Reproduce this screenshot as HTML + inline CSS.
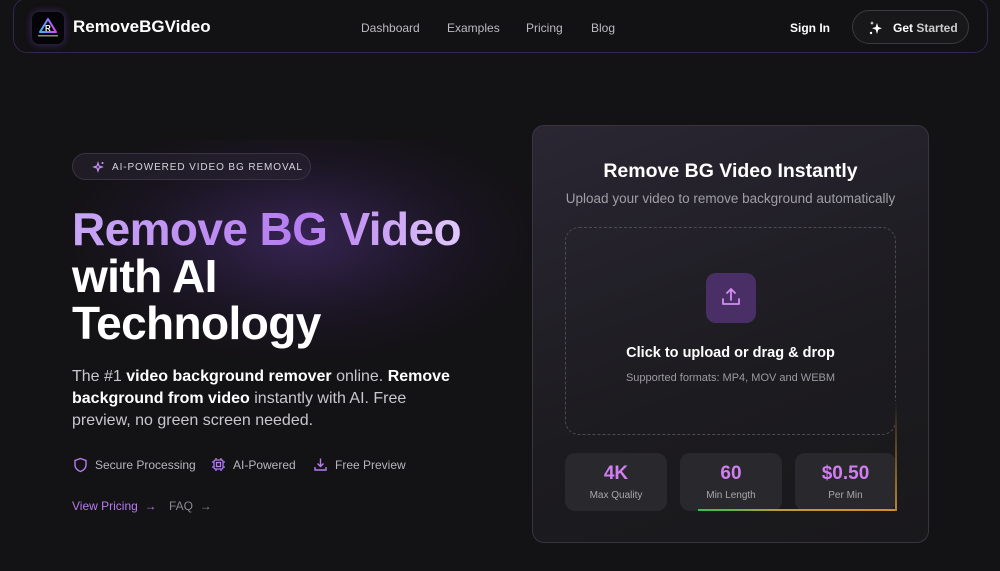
<!DOCTYPE html>
<html><head><meta charset="utf-8"><style>
*{margin:0;padding:0;box-sizing:border-box}
body{width:1000px;height:571px;overflow:hidden;background:#131214;font-family:"Liberation Sans",sans-serif;position:relative;color:#fff}
.glow{position:absolute;left:60px;top:140px;width:480px;height:220px;background:radial-gradient(ellipse at 50% 45%,rgba(110,65,180,.38),rgba(70,40,120,.15) 45%,rgba(0,0,0,0) 72%)}
.hdr{position:absolute;left:13px;top:-2px;width:975px;height:55px;border:1px solid #35264d;border-radius:14px;background:#121113}
.logo{position:absolute;left:32px;top:12px;width:32px;height:32px;border-radius:7px;background:#050508;box-shadow:0 0 8px rgba(140,90,255,.4)}
.brand{position:absolute;left:73px;top:17px;font-size:17px;font-weight:bold}
.nav{position:absolute;top:21px;font-size:12px;color:#bdbbc2}
.btn{position:absolute;left:852px;top:10px;width:117px;height:34px;border-radius:17px;border:1px solid #3a3a3e;background:#18181a;font-size:12px;font-weight:bold}
.badge{position:absolute;left:72px;top:153px;width:239px;height:27px;border:1px solid #3a3344;border-radius:14px;background:rgba(40,35,50,.6);font-size:10px;letter-spacing:.9px;color:#d6d3dc;padding:8px 0 0 39px;white-space:nowrap}
h1{position:absolute;left:72px;top:206px;font-size:46px;line-height:47px;font-weight:bold;letter-spacing:-.6px}
.p{position:absolute;left:72px;top:366px;width:392px;font-size:16px;line-height:22px;color:#c9c7cd}
.p b{color:#fff}
.f{position:absolute;top:458px;font-size:12px;color:#b8b6bc}
.card{position:absolute;left:532px;top:125px;width:397px;height:418px;border:1px solid #38363c;border-radius:12px;background:linear-gradient(160deg,#2a2633,#1c1b1f 60%,#19181b)}
.drop{position:absolute;left:32px;top:101px;width:331px;height:208px;border:1.5px dashed #4c4a52;border-radius:14px}
.st{position:absolute;top:327px;width:102px;height:58px;border-radius:10px;background:#29282c;text-align:center}
.st b{display:block;font-size:19px;color:#d07ef0;margin-top:10px}
.st span{font-size:10px;color:#a9a7ae}
</style></head><body>
<div class="glow"></div>
<div class="hdr"></div>
<div class="logo"><svg width="32" height="32"><defs><linearGradient id="g" x1="0" x2="1"><stop offset="0" stop-color="#38b6ff"/><stop offset="1" stop-color="#e040fb"/></linearGradient></defs><path d="M16 7 L24 20 L8 20 Z" fill="none" stroke="url(#g)" stroke-width="2" stroke-linejoin="round"/><text x="13" y="19" font-size="8" font-weight="bold" fill="#fff" font-family="Liberation Sans">R</text><rect x="6" y="23" width="20" height="1.5" fill="#888"/></svg></div>
<div class="brand">RemoveBGVideo</div>
<div class="nav" style="left:361px">Dashboard</div>
<div class="nav" style="left:447px">Examples</div>
<div class="nav" style="left:526px">Pricing</div>
<div class="nav" style="left:591px">Blog</div>
<div class="nav" style="left:790px;color:#fff;font-weight:bold">Sign In</div>
<div class="btn"><svg style="position:absolute;left:15px;top:9px" width="16" height="16" viewBox="0 0 16 16" fill="#fff"><path d="M9 3 L10.3 7 L14 8.3 L10.3 9.6 L9 14 L7.7 9.6 L4 8.3 L7.7 7Z"/><path d="M4 1 L4.6 2.6 L6 3 L4.6 3.6 L4 5 L3.4 3.6 L2 3 L3.4 2.6Z"/><circle cx="3" cy="13" r="1.2"/></svg><span style="position:absolute;left:40px;top:10px">Get <span style="color:#ccc">Started</span></span></div>
<div class="badge"><svg style="position:absolute;left:19px;top:7px" width="13" height="13" viewBox="0 0 13 13" fill="none" stroke="#c58cf5" stroke-width="1.2"><path d="M6 2 L7 5 L10 6 L7 7 L6 10 L5 7 L2 6 L5 5Z"/><path d="M10.5 1v2M9.5 2h2"/></svg>AI-POWERED VIDEO BG REMOVAL</div>
<h1><span style="background:linear-gradient(90deg,#c9a6f5,#b57cf0 60%,#e0c8fa);-webkit-background-clip:text;color:transparent">Remove BG Video</span><br>with AI<br>Technology</h1>
<div class="p">The #1 <b>video background remover</b> online. <b>Remove background from video</b> instantly with AI. Free preview, no green screen needed.</div>
<svg style="position:absolute;left:73px;top:457px" width="15" height="16" viewBox="0 0 15 16" fill="none" stroke="#b67cf0" stroke-width="1.4"><path d="M7.5 1.5 L13 3.5 V8 C13 11 10.5 13.5 7.5 14.5 C4.5 13.5 2 11 2 8 V3.5Z"/></svg>
<div class="f" style="left:95px">Secure Processing</div>
<svg style="position:absolute;left:211px;top:457px" width="15" height="15" viewBox="0 0 15 15" fill="none" stroke="#b67cf0" stroke-width="1.3"><rect x="3" y="3" width="9" height="9" rx="1.5"/><rect x="5.5" y="5.5" width="4" height="4"/><path d="M5 1v2M10 1v2M5 12v2M10 12v2M1 5h2M1 10h2M12 5h2M12 10h2"/></svg>
<div class="f" style="left:233px">AI-Powered</div>
<svg style="position:absolute;left:313px;top:457px" width="15" height="15" viewBox="0 0 15 15" fill="none" stroke="#b67cf0" stroke-width="1.4"><path d="M7.5 1.5v8M4.5 6.5l3 3 3-3M2 10v3h11v-3"/></svg>
<div class="f" style="left:335px">Free Preview</div>
<div style="position:absolute;left:72px;top:499px;font-size:12px;color:#b67cf0">View Pricing &nbsp;→</div>
<div style="position:absolute;left:169px;top:499px;font-size:12px;color:#8a888e">FAQ &nbsp;→</div>
<div class="card">
<div style="position:absolute;left:0;width:100%;top:34px;text-align:center;font-size:19.5px;font-weight:bold">Remove BG Video Instantly</div>
<div style="position:absolute;left:0;width:100%;top:65px;text-align:center;font-size:13.5px;color:#a19fa6">Upload your video to remove background automatically</div>
<div class="drop"></div>
<div style="position:absolute;left:173px;top:147px;width:50px;height:50px;border-radius:10px;background:#4a2f66"><svg style="position:absolute;left:14px;top:13px" width="22" height="22" viewBox="0 0 22 22" fill="none" stroke="#d28ef5" stroke-width="1.8" stroke-linecap="round" stroke-linejoin="round"><path d="M11 14V3M7 7l4-4 4 4M3 13v5h16v-5"/></svg></div>
<div style="position:absolute;left:0;width:100%;top:219px;text-align:center;font-size:14.5px;font-weight:bold">Click to upload or drag &amp; drop</div>
<div style="position:absolute;left:0;width:100%;top:246px;text-align:center;font-size:11px;color:#9c9aa2">Supported formats: MP4, MOV and WEBM</div>
<div class="st" style="left:32px"><b>4K</b><span>Max Quality</span></div>
<div class="st" style="left:147px"><b>60</b><span>Min Length</span></div>
<div class="st" style="left:262px;width:101px"><b>$0.50</b><span>Per Min</span></div>
<div style="position:absolute;left:165px;top:383px;width:199px;height:2px;background:linear-gradient(90deg,#2fbf5a,#b9a030 40%,#d4901f)"></div>
<div style="position:absolute;left:362px;top:275px;width:2px;height:110px;background:linear-gradient(#1c1b1f,#b78530)"></div>
</div>
</body></html>
